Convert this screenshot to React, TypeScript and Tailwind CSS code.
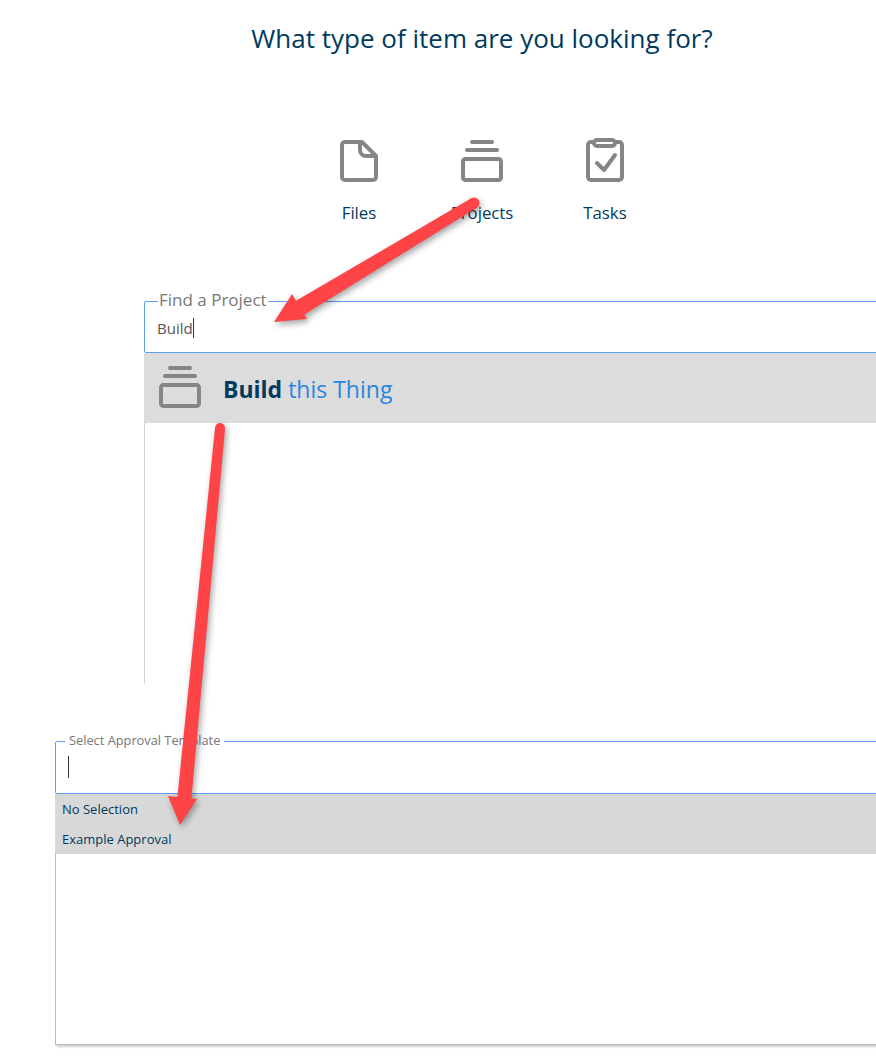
const font = { fontFamily: '"Open Sans", sans-serif' };

function FileIcon() {
  return (
    <svg width="44" height="44" viewBox="337 139 44 44" fill="none" stroke="#858585" strokeWidth="4" strokeLinejoin="round" strokeLinecap="round">
      <path d="M345 142H362L376 156V177a3 3 0 0 1-3 3H345a3 3 0 0 1-3-3V145a3 3 0 0 1 3-3z" />
      <path d="M360 142V150a6 6 0 0 0 6 6H376" />
    </svg>
  );
}

function ProjectIcon({ className = '' }: { className?: string }) {
  return (
    <svg className={className} width="44" height="44" viewBox="460 139 44 44" fill="none" stroke="#858585" strokeWidth="4" strokeLinecap="round" strokeLinejoin="round">
      <path d="M472 142H492" />
      <path d="M467 150H497" />
      <rect x="463" y="159" width="38" height="21" rx="2.5" />
    </svg>
  );
}

function TaskIcon() {
  return (
    <svg width="44" height="46" viewBox="583 137 44 46" fill="none" stroke="#858585" strokeWidth="4" strokeLinecap="round" strokeLinejoin="round">
      <path d="M594 142H591a3 3 0 0 0-3 3V177a3 3 0 0 0 3 3H619a3 3 0 0 0 3-3V145a3 3 0 0 0-3-3H616" />
      <rect x="594" y="140" width="21" height="6" rx="3" />
      <path d="M597 163L604 170L615 155" />
    </svg>
  );
}

function Option({ icon, label }: { icon: React.ReactNode; label: string }) {
  return (
    <div className="w-[123px] flex flex-col items-center">
      <div className="h-[44px] flex items-end">{icon}</div>
      <span className="mt-[19px] text-[16.8px] leading-[22px] text-[#003a5d]">{label}</span>
    </div>
  );
}

function Arrows() {
  return (
    <svg className="absolute left-0 top-0 pointer-events-none" width="876" height="1063" viewBox="0 0 876 1063" fill="#ff4448" style={{ filter: 'drop-shadow(2px 3px 3px rgba(0,0,0,0.35))' }}>
      <circle cx="474" cy="203" r="5.5" />
      <polygon points="476.8,207.7 471.2,198.3 293.9,302.1 302.1,315.9" />
      <polygon points="274,322 292,294 307,319" />
      <circle cx="220" cy="428" r="5" />
      <polygon points="215,428 225,429 191,803 177,801" />
      <polygon points="180,825 168,796 197,799" />
    </svg>
  );
}

export default function App() {
  return (
    <div className="relative w-[876px] h-[1063px] overflow-hidden bg-white" style={font}>
      <div className="w-[964px] pt-[19px]">
        <h1 className="text-center text-[26px] leading-[38px] text-[#003a5d]">What type of item are you looking for?</h1>

        <div className="mt-[82px] flex justify-center">
          <Option icon={<FileIcon />} label="Files" />
          <Option icon={<ProjectIcon />} label="Projects" />
          <Option icon={<TaskIcon />} label="Tasks" />
        </div>

        <div className="mt-[66px] ml-[144px]">
          <fieldset className="h-[63px] border border-[#5f9df0] rounded-[2px]">
            <legend className="ml-[13px] px-[1px] pb-[2px] text-[17px] leading-[20px] text-[#777777]">Find a Project</legend>
            <div className="flex items-center h-[32px] pl-[12px] text-[15px] text-[#555555]">
              Build
              <span className="w-px h-[20px] bg-[#333333]" />
            </div>
          </fieldset>
          <div className="h-[70px] flex items-center bg-[#dcdcdc] pl-[14px]">
            <ProjectIcon className="mb-[2px]" />
            <div className="ml-[21px] mt-[3px] text-[23px] text-[#2a86e0]">
              <span className="font-bold text-[#003a5d]">Build</span> this Thing
            </div>
          </div>
          <div className="h-[261px] border-l border-[#d5d5d5]" />
        </div>

        <div className="mt-[47px] ml-[55px]">
          <fieldset className="h-[63px] border border-[#5f9df0] rounded-[2px]">
            <legend className="ml-[9px] px-[4px] pb-[2px] text-[12.8px] leading-[18px] text-[#777777]">Select Approval Template</legend>
            <div className="flex items-center h-[22px] mt-[5px] pl-[12px]">
              <span className="w-px h-[22px] bg-[#333333]" />
            </div>
          </fieldset>
          <div className="bg-[#d8d8d8] h-[60px] flex flex-col">
            <div className="h-[30px] flex items-center pl-[7px] pt-[2px] text-[13px] text-[#003a5d]">No Selection</div>
            <div className="h-[30px] flex items-center pl-[7px] pt-[2px] text-[13px] text-[#003a5d]">Example Approval</div>
          </div>
          <div className="h-[191px] border-l border-b border-[#b9b9c6] shadow-[2px_2px_2px_rgba(0,0,0,0.2)]" />
        </div>
      </div>
      <Arrows />
    </div>
  );
}
